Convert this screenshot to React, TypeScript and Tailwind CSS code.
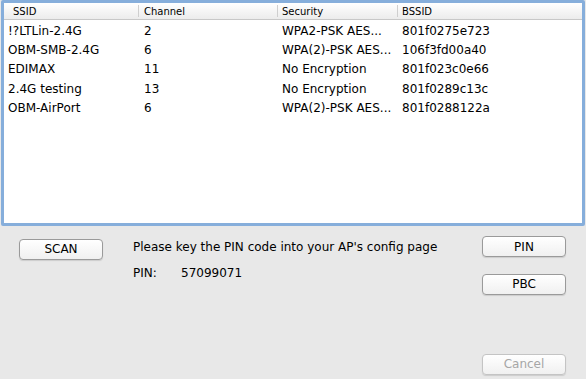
import React from 'react';

const networks = [
  { ssid: '!?LTLin-2.4G', channel: '2', security: 'WPA2-PSK AES...', bssid: '801f0275e723' },
  { ssid: 'OBM-SMB-2.4G', channel: '6', security: 'WPA(2)-PSK AES...', bssid: '106f3fd00a40' },
  { ssid: 'EDIMAX', channel: '11', security: 'No Encryption', bssid: '801f023c0e66' },
  { ssid: '2.4G testing', channel: '13', security: 'No Encryption', bssid: '801f0289c13c' },
  { ssid: 'OBM-AirPort', channel: '6', security: 'WPA(2)-PSK AES...', bssid: '801f0288122a' },
];

function MacButton({ label, disabled }: { label: string; disabled?: boolean }) {
  return (
    <button
      className={`w-[84px] h-[21px] rounded-[4px] border text-[12px] leading-none bg-gradient-to-b from-white to-[#f0f0f0] shadow-[0_1px_1px_rgba(0,0,0,0.12)] ${
        disabled ? 'border-[#c4c4c4] text-[#a6a6a6]' : 'border-[#9a9a9a] text-black'
      }`}
    >
      {label}
    </button>
  );
}

export default function App() {
  return (
    <div className="w-[586px] h-[379px] bg-[#e8e8e8] font-['DejaVu_Sans',Verdana,sans-serif] text-black relative overflow-hidden">
      {/* network list */}
      <div className="mx-[1px] h-[226px] border-[3px] border-[#86aedb] rounded-[2px] bg-white overflow-hidden">
        <div className="h-[17px] flex text-[10px] bg-gradient-to-b from-white to-[#ececec] border-b border-[#c8c8c8] items-center">
          <div className="w-[135px] pl-[9px] border-r border-[#cfcfcf] h-[12px] flex items-center">SSID</div>
          <div className="w-[139px] pl-[5px] border-r border-[#cfcfcf] h-[12px] flex items-center">Channel</div>
          <div className="w-[120px] pl-[4px] border-r border-[#cfcfcf] h-[12px] flex items-center">Security</div>
          <div className="flex-1 pl-[4px] h-[12px] flex items-center">BSSID</div>
        </div>
        <div className="pt-[1px]">
          {networks.map((n) => (
            <div key={n.bssid} className="h-[19.4px] flex items-center text-[12px]">
              <div className="w-[135px] pl-[4px]">{n.ssid}</div>
              <div className="w-[139px] pl-[5px]">{n.channel}</div>
              <div className="w-[120px] pl-[4px] whitespace-nowrap">{n.security}</div>
              <div className="flex-1 pl-[4px]">{n.bssid}</div>
            </div>
          ))}
        </div>
      </div>

      {/* controls */}
      <div className="flex pt-[10px]">
        <div className="pl-[19px] w-[133px]">
          <MacButton label="SCAN" />
        </div>
        <div className="flex-1 text-[12px]">
          <div className="h-[21px] flex items-center">Please key the PIN code into your AP's config page</div>
          <div className="h-[21px] mt-[5px] flex items-center">
            <span className="w-[48px]">PIN:</span>
            <span>57099071</span>
          </div>
        </div>
        <div className="pr-[20px] flex flex-col">
          <MacButton label="PIN" />
          <div className="mt-[14px]">
            <MacButton label="PBC" />
          </div>
          <div className="mt-[56px]">
            <MacButton label="Cancel" disabled />
          </div>
        </div>
      </div>
    </div>
  );
}
